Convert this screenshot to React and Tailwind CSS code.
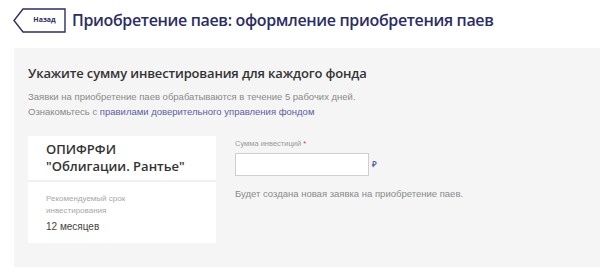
export default function App() {
  return (
    <div className="w-[600px] h-[277px] bg-white overflow-hidden font-['Liberation_Sans',Arial,sans-serif]">
      {/* Header */}
      <div className="flex items-center h-[39px] pl-[13px] pt-[1px]">
        <button className="relative w-[53px] h-[25px] shrink-0">
          <svg width="53" height="25" viewBox="0 0 53 25" className="absolute inset-0">
            <path d="M10 1 H52 V24 H10 L1 12.5 Z" fill="white" stroke="#2d2e62" strokeWidth="1.4" strokeLinejoin="miter" />
          </svg>
          <span className="relative block pl-[10px] text-[7px] font-bold text-[#2d2e62] font-['Open_Sans',sans-serif]">Назад</span>
        </button>
        <h1 className="ml-[6px] text-[16px] font-semibold text-[#2c2d63] font-['Open_Sans',sans-serif] tracking-[-0.35px]">
          Приобретение паев: оформление приобретения паев
        </h1>
      </div>

      {/* Panel */}
      <div className="mt-[9px] ml-[14px] h-[219px] bg-[#f5f5f5] pl-[14px] pt-[15px]">
        <h2 className="text-[13px] font-semibold text-[#333] font-['Open_Sans',sans-serif] leading-[20px] tracking-[-0.15px]">
          Укажите сумму инвестирования для каждого фонда
        </h2>
        <p className="mt-[6px] text-[9.5px] leading-[15px] text-[#8a8a8a]">
          Заявки на приобретение паев обрабатываются в течение 5 рабочих дней.
        </p>
        <p className="text-[9.5px] leading-[15px] text-[#8a8a8a]">
          Ознакомьтесь с <span className="text-[#5b5da3]">правилами доверительного управления фондом</span>
        </p>

        <div className="flex mt-[17px]">
          {/* Fund card */}
          <div className="w-[188px] flex flex-col gap-[2px] bg-[#f0f0f0]">
            <div className="bg-white h-[44px] pl-[18px] pt-[5px] font-['Open_Sans',sans-serif] font-semibold text-[13px] leading-[17px] text-[#333]">
              <div>ОПИФРФИ</div>
              <div>"Облигации. Рантье"</div>
            </div>
            <div className="bg-white h-[61px] pl-[18px] pt-[11px]">
              <div className="text-[8px] leading-[12px] text-[#a8a8a8]">
                Рекомендуемый срок
                <br />
                инвестирования
              </div>
              <div className="mt-[2px] text-[10px] text-[#444]">12 месяцев</div>
            </div>
          </div>

          {/* Amount form */}
          <div className="ml-[19px] pt-[2px]">
            <div className="text-[7.5px] text-[#999]">
              Сумма инвестиций <span className="text-[#e53935]">*</span>
            </div>
            <div className="flex items-center mt-[4px]">
              <input
                type="text"
                className="w-[134px] h-[23px] bg-white border border-[#cfcfcf] outline-none"
              />
              <span className="ml-[3px] text-[8px] font-bold text-[#5b5da3]">₽</span>
            </div>
            <p className="mt-[11px] text-[9.5px] text-[#8a8a8a]">
              Будет создана новая заявка на приобретение паев.
            </p>
          </div>
        </div>
      </div>
    </div>
  );
}
